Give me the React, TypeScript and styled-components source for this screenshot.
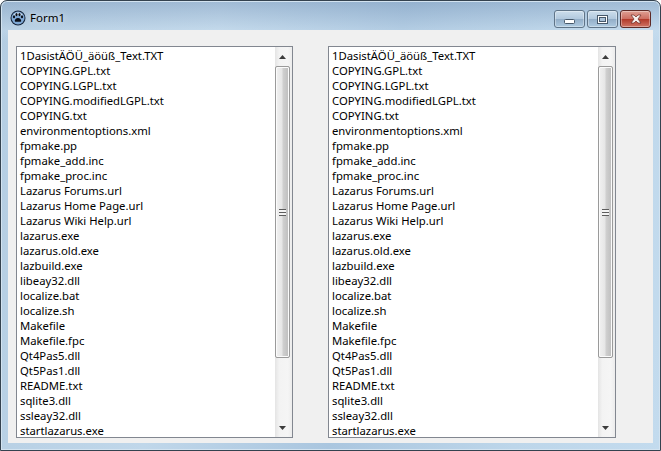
import styled, { createGlobalStyle } from "styled-components";

const GlobalStyle = createGlobalStyle`
  html, body {
    margin: 0;
    padding: 0;
    background: #fff;
  }
  #root {
    width: 661px;
    height: 451px;
  }
`;

const WindowFrame = styled.div`
  box-sizing: border-box;
  width: 661px;
  height: 451px;
  display: flex;
  flex-direction: column;
  border: 1px solid #34424f;
  border-radius: 7px 7px 0 0;
  box-shadow: inset 0 0 0 1px #d3e3f0;
  background:
    linear-gradient(rgba(120, 150, 185, 0.45) 0, rgba(210, 228, 242, 0.25) 30px, rgba(255, 255, 255, 0) 40px),
    linear-gradient(100deg, #b4cde2 0%, #c0d7ea 30%, #aac6df 55%, #bdd6ea 80%, #c3dbee 100%);
  padding: 0 7px 7px 7px;
  overflow: hidden;
`;

const TitleBar = styled.div`
  height: 29px;
  flex: none;
  display: flex;
  align-items: flex-start;
  justify-content: space-between;
`;

const TitleLeft = styled.div`
  display: flex;
  align-items: center;
  gap: 4px;
  padding-top: 7px;
  padding-left: 2px;
`;

const TitleText = styled.span`
  font-family: "Noto Sans", sans-serif;
  font-size: 11.5px;
  line-height: 20px;
  color: #000;
  text-shadow: 0 0 6px rgba(255, 255, 255, 0.9);
`;

const CaptionButtons = styled.div`
  display: flex;
  gap: 2px;
  padding-top: 9px;
  padding-right: 2px;
`;

const CaptionButton = styled.div<{ $close?: boolean; $low?: boolean }>`
  box-sizing: border-box;
  width: 31px;
  height: 18px;
  display: flex;
  align-items: center;
  justify-content: center;
  padding-top: ${p => (p.$low ? "5px" : "0")};
  border: 1px solid ${p => (p.$close ? "#5e2a26" : "#5f7488")};
  border-radius: 3px;
  box-shadow: inset 0 0 0 1px rgba(255, 255, 255, 0.35);
  background: ${p =>
    p.$close
      ? "linear-gradient(#dfa094 0%, #cd6f62 48%, #b23a2b 52%, #cf7565 100%)"
      : "linear-gradient(#cddeec 0%, #b2c9de 48%, #93aec8 52%, #aecae0 100%)"};
`;

const ClientArea = styled.div`
  flex: 1;
  min-height: 0;
  display: flex;
  justify-content: space-between;
  align-items: flex-start;
  background: #f0f0f0;
  padding: 16px 37px 5px 8px;
`;

const ListBox = styled.div<{ $wide?: boolean }>`
  box-sizing: border-box;
  width: ${p => (p.$wide ? "288px" : "277px")};
  height: 392px;
  display: flex;
  background: #fff;
  border: 1px solid #828790;
`;

const Rows = styled.div`
  flex: 1;
  min-width: 0;
  padding: 1px 0 0 3px;
`;

const Row = styled.div`
  height: 15px;
  font-family: "Noto Sans", sans-serif;
  font-size: 11.3px;
  line-height: 15px;
  color: #000;
  white-space: nowrap;
`;

const ScrollBar = styled.div`
  width: 17px;
  flex: none;
  display: flex;
  flex-direction: column;
  background: linear-gradient(90deg, #e4e4e4, #f3f3f3 25%, #f5f5f5 75%, #ececec);
`;

const ArrowCell = styled.div`
  height: 19px;
  flex: none;
  display: flex;
  align-items: center;
  justify-content: center;
  padding-right: 2px;
  box-sizing: border-box;
`;

const Track = styled.div`
  flex: 1;
  min-height: 0;
  display: flex;
  flex-direction: column;
  padding-bottom: 60px;
`;

const Thumb = styled.div`
  box-sizing: border-box;
  flex: 1;
  width: 15px;
  display: flex;
  align-items: center;
  justify-content: center;
  border: 1px solid #9a9a9a;
  border-radius: 2px;
  box-shadow: inset 0 0 0 1px #fbfbfb;
  background: linear-gradient(90deg, #f1f1f1 0%, #e6e6e6 45%, #cfcfcf 55%, #bdbdbd 100%);
`;

const Grip = styled.div`
  width: 7px;
  height: 7px;
  background: repeating-linear-gradient(#5d5d5d 0, #5d5d5d 1px, #f4f4f4 1px, #f4f4f4 3px);
`;

const files = [
  "1DasistÄÖÜ_äöüß_Text.TXT",
  "COPYING.GPL.txt",
  "COPYING.LGPL.txt",
  "COPYING.modifiedLGPL.txt",
  "COPYING.txt",
  "environmentoptions.xml",
  "fpmake.pp",
  "fpmake_add.inc",
  "fpmake_proc.inc",
  "Lazarus Forums.url",
  "Lazarus Home Page.url",
  "Lazarus Wiki Help.url",
  "lazarus.exe",
  "lazarus.old.exe",
  "lazbuild.exe",
  "libeay32.dll",
  "localize.bat",
  "localize.sh",
  "Makefile",
  "Makefile.fpc",
  "Qt4Pas5.dll",
  "Qt5Pas1.dll",
  "README.txt",
  "sqlite3.dll",
  "ssleay32.dll",
  "startlazarus.exe",
];

function PawIcon() {
  return (
    <svg width="16" height="16" viewBox="0 0 16 16">
      <circle cx="8" cy="8" r="7.5" fill="#16243a" />
      <circle cx="8" cy="8" r="6.5" fill="#7fa9d6" />
      <path d="M8 2.5a5.5 5.5 0 0 1 5 3H3a5.5 5.5 0 0 1 5-3z" fill="#dfeaf5" opacity="0.8" />
      <path d="M8 8c-2 0-3.4 1.7-3.2 3 .2 1 1.4 1 3.2.7 1.8.3 3 .3 3.2-.7.2-1.3-1.2-3-3.2-3z" fill="#0b0f18" />
      <ellipse cx="4" cy="6.8" rx="1.1" ry="1.5" fill="#0b0f18" />
      <ellipse cx="6.5" cy="4.6" rx="1.1" ry="1.6" fill="#0b0f18" />
      <ellipse cx="9.5" cy="4.6" rx="1.1" ry="1.6" fill="#0b0f18" />
      <ellipse cx="12" cy="6.8" rx="1.1" ry="1.5" fill="#0b0f18" />
    </svg>
  );
}

function Arrow({ down }: { down?: boolean }) {
  return (
    <svg width="7" height="4" viewBox="0 0 7 4">
      <path d={down ? "M0 0h7L3.5 4z" : "M3.5 0L7 4H0z"} fill="#3c3c3c" />
    </svg>
  );
}

function FileList({ wide }: { wide?: boolean }) {
  return (
    <ListBox $wide={wide}>
      <Rows>
        {files.map(name => (
          <Row key={name}>{name}</Row>
        ))}
      </Rows>
      <ScrollBar>
        <ArrowCell>
          <Arrow />
        </ArrowCell>
        <Track>
          <Thumb>
            <Grip />
          </Thumb>
        </Track>
        <ArrowCell>
          <Arrow down />
        </ArrowCell>
      </ScrollBar>
    </ListBox>
  );
}

export default function App() {
  return (
    <>
      <GlobalStyle />
      <WindowFrame>
        <TitleBar>
          <TitleLeft>
            <PawIcon />
            <TitleText>Form1</TitleText>
          </TitleLeft>
          <CaptionButtons>
            <CaptionButton $low>
              <svg width="11" height="5" viewBox="0 0 11 5">
                <rect x="0.5" y="0.5" width="10" height="4" rx="1" fill="#fff" stroke="#46586a" />
              </svg>
            </CaptionButton>
            <CaptionButton>
              <svg width="11" height="9" viewBox="0 0 11 9">
                <rect x="0.5" y="0.5" width="10" height="8" fill="#fff" stroke="#46586a" />
                <rect x="2.5" y="2.5" width="6" height="4" fill="#a9c1d8" stroke="#46586a" />
              </svg>
            </CaptionButton>
            <CaptionButton $close>
              <svg width="12" height="10" viewBox="0 0 12 10">
                <path d="M1 1h3l2 2 2-2h3L8 5l3 4H8L6 7 4 9H1l3-4z" fill="#f6f0ee" stroke="#6a2a22" strokeWidth="0.7" />
              </svg>
            </CaptionButton>
          </CaptionButtons>
        </TitleBar>
        <ClientArea>
          <FileList />
          <FileList wide />
        </ClientArea>
      </WindowFrame>
    </>
  );
}
